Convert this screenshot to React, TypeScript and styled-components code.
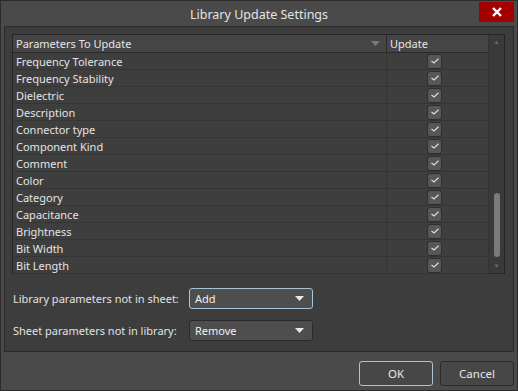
import styled, { createGlobalStyle } from "styled-components";

const params = [
    "Frequency Tolerance",
    "Frequency Stability",
    "Dielectric",
    "Description",
    "Connector type",
    "Component Kind",
    "Comment",
    "Color",
    "Category",
    "Capacitance",
    "Brightness",
    "Bit Width",
    "Bit Length",
];

const GlobalStyle = createGlobalStyle`
    html, body {
        margin: 0;
        padding: 0;
        background: #4a4a4a;
    }
    body {
        font-family: "Noto Sans", "Open Sans", sans-serif;
        font-size: 11px;
        color: #e2e2e2;
    }
`;

const Check = () => (
    <svg width="10" height="8" viewBox="0 0 10 8">
        <path d="M1.5 4 L4 6 L8.5 1.8" fill="none" stroke="#dcdcdc" strokeWidth="1.2" />
    </svg>
);

const Caret = ({ color = "#e8e8e8" }: { color?: string }) => (
    <svg width="9" height="5" viewBox="0 0 9 5">
        <path d="M0 0 H9 L4.5 5 Z" fill={color} />
    </svg>
);

const App = () => {
    return (
        <Window>
            <GlobalStyle />
            <TitleBar>
                <Title>Library Update Settings</Title>
                <CloseBtn>
                    <svg width="10" height="10" viewBox="0 0 10 10">
                        <path d="M1 1 L9 9 M9 1 L1 9" stroke="#fff" strokeWidth="2.4" />
                    </svg>
                </CloseBtn>
            </TitleBar>
            <Body>
                <Table>
                    <Grid>
                        <HeadCell>
                            <span>Parameters To Update</span>
                            <Caret color="#7a7a7a" />
                        </HeadCell>
                        <HeadCell $last>Update</HeadCell>
                        {params.map((p) => (
                            <Row key={p}>
                                <NameCell>{p}</NameCell>
                                <CheckCell>
                                    <CheckBox>
                                        <Check />
                                    </CheckBox>
                                </CheckCell>
                            </Row>
                        ))}
                    </Grid>
                    <ScrollBar>
                        <Arrow>▲</Arrow>
                        <Track>
                            <Thumb />
                        </Track>
                        <Arrow>▼</Arrow>
                    </ScrollBar>
                </Table>
                <Options>
                    <Label>Library parameters not in sheet:</Label>
                    <Select $focused>
                        <span>Add</span>
                        <Caret />
                    </Select>
                    <Label>Sheet parameters not in library:</Label>
                    <Select>
                        <span>Remove</span>
                        <Caret />
                    </Select>
                </Options>
            </Body>
            <Footer>
                <Button $focused>OK</Button>
                <Button>Cancel</Button>
            </Footer>
        </Window>
    );
};

const Window = styled.div`
    width: 518px;
    height: 391px;
    box-sizing: border-box;
    border: 1px solid #2c2c2c;
    background: #4a4a4a;
    display: flex;
    flex-direction: column;
`;

const TitleBar = styled.div`
    height: 25px;
    position: relative;
    display: flex;
    align-items: center;
    justify-content: center;
`;

const Title = styled.div`
    font-size: 12.5px;
    color: #e4e4e4;
    margin-top: 2px;
`;

const CloseBtn = styled.div`
    position: absolute;
    right: 3px;
    top: 1px;
    width: 35px;
    height: 20px;
    background: #a50000;
    display: flex;
    align-items: center;
    justify-content: center;
`;

const Body = styled.div`
    margin: 0 3px;
    height: 326px;
    box-sizing: border-box;
    border: 1px solid #2a2a2a;
    background: #3d3d3d;
    padding: 7px 8px 0 7px;
    display: flex;
    flex-direction: column;
`;

const Table = styled.div`
    height: 240px;
    box-sizing: border-box;
    border: 1px solid #262626;
    background: #3e3e3e;
    display: flex;
`;

const Grid = styled.div`
    flex: 1;
    display: grid;
    grid-template-columns: 374px 1fr;
    grid-auto-rows: 17px;
    grid-template-rows: 18px;
    align-content: start;
`;

const HeadCell = styled.div<{ $last?: boolean }>`
    background: #454545;
    border-bottom: 1px solid #2a2a2a;
    border-right: ${(p) => (p.$last ? "none" : "1px solid #2a2a2a")};
    display: flex;
    align-items: center;
    justify-content: space-between;
    padding: 0 6px 0 3px;
    color: #e6e6e6;
    box-sizing: border-box;
`;

const Row = styled.div`
    display: contents;
`;

const NameCell = styled.div`
    border-bottom: 1px solid #353535;
    border-right: 1px solid #353535;
    padding-left: 3px;
    display: flex;
    align-items: center;
    color: #e4e4e4;
`;

const CheckCell = styled.div`
    border-bottom: 1px solid #353535;
    display: flex;
    align-items: center;
    justify-content: center;
    padding-right: 6px;
`;

const CheckBox = styled.div`
    width: 15px;
    height: 15px;
    box-sizing: border-box;
    border: 1px solid #2e2e2e;
    border-radius: 3px;
    background: #575757;
    display: flex;
    align-items: center;
    justify-content: center;
`;

const ScrollBar = styled.div`
    width: 15px;
    background: #3a3a3a;
    border-left: 1px solid #333;
    display: flex;
    flex-direction: column;
    align-items: center;
`;

const Arrow = styled.div`
    font-size: 6px;
    height: 14px;
    line-height: 14px;
    color: #6c6c6c;
`;

const Track = styled.div`
    flex: 1;
    display: flex;
    flex-direction: column;
    justify-content: flex-end;
    padding-bottom: 2px;
`;

const Thumb = styled.div`
    width: 6px;
    height: 64px;
    border-radius: 3px;
    background: #7a7a7a;
`;

const Options = styled.div`
    display: grid;
    grid-template-columns: 176px 124px;
    grid-auto-rows: 21px;
    row-gap: 11px;
    margin-top: 14px;
    margin-left: 1px;
    align-items: center;
`;

const Label = styled.div`
    color: #e2e2e2;
    white-space: nowrap;
`;

const Select = styled.div<{ $focused?: boolean }>`
    height: 21px;
    box-sizing: border-box;
    border: 1px solid ${(p) => (p.$focused ? "#a8c4d8" : "#2a2a2a")};
    border-radius: 3px;
    background: #4e4e4e;
    display: flex;
    align-items: center;
    justify-content: space-between;
    padding: 0 8px 0 5px;
    color: #f0f0f0;
`;

const Footer = styled.div`
    flex: 1;
    display: flex;
    justify-content: flex-end;
    align-items: center;
    gap: 7px;
    padding: 4px 3px 0 0;
`;

const Button = styled.button<{ $focused?: boolean }>`
    width: 74px;
    height: 25px;
    box-sizing: border-box;
    border: 1px solid ${(p) => (p.$focused ? "#a8c4d8" : "#2a2a2a")};
    border-radius: 3px;
    background: #474747;
    color: #e8e8e8;
    font-family: "Noto Sans", "Open Sans", sans-serif;
    font-size: 11.5px;
`;

export default App;
